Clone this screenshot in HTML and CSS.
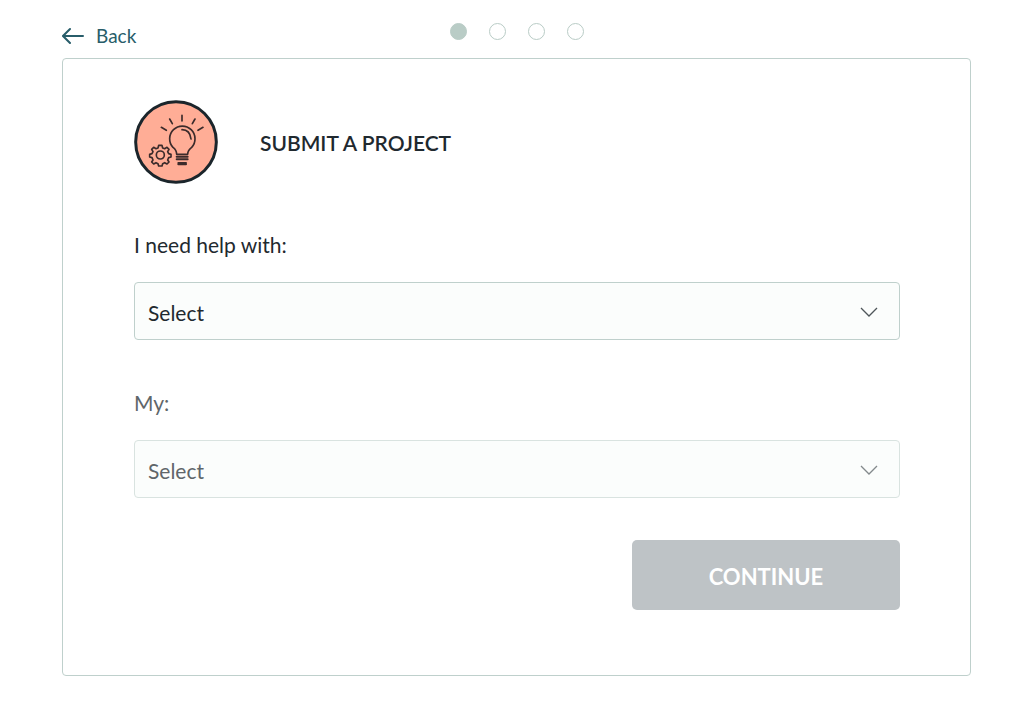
FILE: index.html
```html
<!DOCTYPE html>
<html lang="en">
<head>
<meta charset="utf-8">
<meta name="viewport" content="width=device-width, initial-scale=1">
<title>Submit a project</title>
<link rel="stylesheet" href="styles.css">
</head>
<body>
<div class="page">
  <header class="topbar">
    <a class="back" href="#">
      <svg class="back-arrow" viewBox="0 0 22 18" aria-hidden="true"><path d="M21 9H2M8 2L1 9l7 7"/></svg>
      <span>Back</span>
    </a>
    <ol class="steps" aria-label="Progress">
      <li class="step step-current"></li>
      <li class="step"></li>
      <li class="step"></li>
      <li class="step"></li>
    </ol>
  </header>
  <main class="card">
    <div class="heading">
      <svg class="badge" viewBox="27 25 252 252" aria-hidden="true">
        <circle cx="153" cy="151" r="121" fill="#ffad96" stroke="#1b252b" stroke-width="9"/>
        <g fill="none" stroke="#3b2b2b" stroke-width="5" stroke-linecap="round" stroke-linejoin="round">
          <path d="M171 71v17M134 82l8 14M210 82l-8 14M109 107l15 9M234 107l-15 9"/>
          <path d="M155 188c0-10-3-15-11-21a38 38 0 1 1 56 0c-8 6-12 11-12 21z"/>
          <path d="M171 114c15 0 25 10 27 28"/>
          <path d="M155 195h33M155 203h33M160 214h23M160 218h23" stroke-width="6"/>
          <circle cx="106" cy="190" r="12"/>
          <path d="M101 161h10l2 8 6 2 7-4 6 6-4 7 3 6 7 2v8l-7 2-3 7 4 6-6 6-7-4-6 3-2 7h-10l-2-7-6-3-7 4-6-6 4-6-3-7-7-2v-8l7-2 3-6-4-7 6-6 7 4 6-2z"/>
        </g>
      </svg>
      <h1 class="title">SUBMIT A PROJECT</h1>
    </div>
    <form class="form">
      <div class="field">
        <label class="label" for="need">I need help with:</label>
        <div class="control">
          <select class="select" id="need"><option>Select</option></select>
          <svg class="chevron" viewBox="0 0 18 10" aria-hidden="true"><path d="M1 1l8 8 8-8"/></svg>
        </div>
      </div>
      <div class="field field-disabled">
        <label class="label" for="subject">My:</label>
        <div class="control">
          <select class="select" id="subject" disabled><option>Select</option></select>
          <svg class="chevron" viewBox="0 0 18 10" aria-hidden="true"><path d="M1 1l8 8 8-8"/></svg>
        </div>
      </div>
      <button class="continue" type="submit" disabled>CONTINUE</button>
    </form>
  </main>
</div>
</body>
</html>
```
FILE: styles.css
```css
* { box-sizing: border-box; }
body {
  margin: 0;
  background: #fff;
  color: #1f292f;
  font-family: Lato, "Open Sans", sans-serif;
  font-size: 21px;
  line-height: 28px;
}
.page { padding: 0 53px 44px 62px; }
.topbar {
  display: grid;
  grid-template-columns: 1fr auto 1fr;
  align-items: start;
  height: 58px;
  padding-top: 22px;
}
.back {
  display: flex;
  align-items: center;
  gap: 12px;
  color: #285d6a;
  font-size: 19px;
  text-decoration: none;
}
.back-arrow { width: 22px; height: 18px; fill: none; stroke: #285d6a; stroke-width: 2; stroke-linecap: round; }
.steps { display: flex; gap: 22px; margin: 0; padding: 1px 0 0; list-style: none; }
.step { width: 17px; height: 17px; border: 1px solid #b9ccc6; border-radius: 50%; }
.step-current { background: #b9ccc6; }
.card { padding: 41px 70px 65px 71px; border: 1px solid #bfd0cc; border-radius: 4px; }
.heading { display: flex; align-items: center; gap: 42px; }
.badge { flex: none; width: 84px; height: 84px; }
.title { margin: 0; padding-top: 2px; font-size: 21px; font-weight: 600; line-height: 28px; }
.form { display: flex; flex-direction: column; margin-top: 47px; }
.field { display: flex; flex-direction: column; gap: 23px; margin-bottom: 49px; }
.field-disabled { margin-bottom: 42px; color: #5f666a; }
.control { display: grid; align-items: center; }
.select {
  grid-area: 1 / 1;
  width: 100%;
  height: 58px;
  padding: 3px 44px 0 13px;
  border: 1px solid #bfd0cc;
  border-radius: 4px;
  background: #fbfdfc;
  color: inherit;
  font: inherit;
  appearance: none;
}
.select:disabled { border-color: #d9e3e0; opacity: 1; }
.chevron {
  grid-area: 1 / 1;
  justify-self: end;
  width: 18px;
  height: 10px;
  margin: 2px 22px 0 0;
  fill: none;
  stroke: #4e565a;
  stroke-width: 1.3;
  pointer-events: none;
}
.field-disabled .chevron { stroke: #83898c; }
.continue {
  align-self: flex-end;
  width: 35%;
  height: 70px;
  padding: 3px 0 0;
  border: 0;
  border-radius: 5px;
  background: #bec3c6;
  color: #fff;
  font: inherit;
  font-size: 22px;
  font-weight: 700;
}
```
